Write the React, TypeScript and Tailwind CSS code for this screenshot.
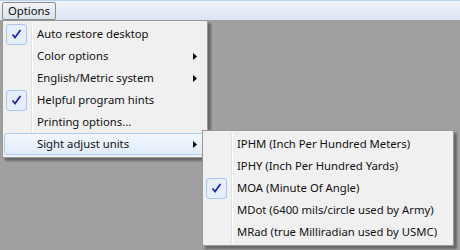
import React from "react";

type Item = { label: string; checked?: boolean; sub?: boolean; active?: boolean };

const mainItems: Item[] = [
  { label: "Auto restore desktop", checked: true },
  { label: "Color options", sub: true },
  { label: "English/Metric system", sub: true },
  { label: "Helpful program hints", checked: true },
  { label: "Printing options..." },
  { label: "Sight adjust units", sub: true, active: true },
];

const unitItems: Item[] = [
  { label: "IPHM (Inch Per Hundred Meters)" },
  { label: "IPHY (Inch Per Hundred Yards)" },
  { label: "MOA (Minute Of Angle)", checked: true },
  { label: "MDot (6400 mils/circle used by Army)" },
  { label: "MRad (true Milliradian used by USMC)" },
];

function Check() {
  return (
    <div className="w-[21px] h-[21px] rounded-[3px] border border-[#a9c7ec] bg-[#e6eef9] flex items-center justify-center">
      <svg width="11" height="11" viewBox="0 0 11 11">
        <path d="M1.5 5.5 L4 8.5 L9.5 1" fill="none" stroke="#1f2aa8" strokeWidth="1.8" />
      </svg>
    </div>
  );
}

function Arrow() {
  return (
    <svg width="4" height="7" viewBox="0 0 4 7" className="shrink-0">
      <path d="M0 0 L4 3.5 L0 7 Z" fill="#000" />
    </svg>
  );
}

function MenuRow({ item }: { item: Item }) {
  return (
    <div
      className={
        "h-[22px] flex items-center rounded-[3px] border " +
        (item.active
          ? "border-[#aecff7] bg-gradient-to-b from-[#f2f7fe] to-[#e1ebf8]"
          : "border-transparent")
      }
    >
      <div className="w-[28px] shrink-0 flex items-center pl-[1px]">{item.checked && <Check />}</div>
      <span className="ml-[4px] text-[11.3px] text-[#111] leading-none whitespace-nowrap">{item.label}</span>
      {item.sub && (
        <div className="ml-auto mr-[8px] flex">
          <Arrow />
        </div>
      )}
    </div>
  );
}

function Menu({ items, className }: { items: Item[]; className: string }) {
  return (
    <div
      className={
        "absolute border border-[#979797] bg-[#f0f0f0] px-[1px] py-[2px] shadow-[3px_3px_2px_rgba(0,0,0,0.35)] " +
        className
      }
    >
      <div className="absolute top-[2px] bottom-[2px] left-[28px] w-[2px] border-l border-[#e2e3e3] border-r border-r-white" />
      <div className="relative flex flex-col">
        {items.map((it) => (
          <MenuRow key={it.label} item={it} />
        ))}
      </div>
    </div>
  );
}

export default function App() {
  return (
    <div
      className="relative w-[460px] h-[250px] bg-[#a0a0a0] overflow-hidden"
      style={{ fontFamily: "'Noto Sans', 'DejaVu Sans', sans-serif" }}
    >
      <div className="h-[20px] border-t border-[#bcd2ec] bg-gradient-to-b from-[#f1f5fb] to-[#d9e3f2] flex items-center px-[2px]">
        <div className="h-[18px] px-[5px] flex items-center rounded-[2px] border border-[#8c8c8c] bg-gradient-to-b from-[#f2f4f7] to-[#dde3ea] text-[11.3px] text-[#111] leading-none">
          Options
        </div>
      </div>

      <Menu items={mainItems} className="left-[2px] top-[20px] w-[206px]" />
      <Menu items={unitItems} className="left-[202px] top-[130px] w-[252px]" />
    </div>
  );
}
